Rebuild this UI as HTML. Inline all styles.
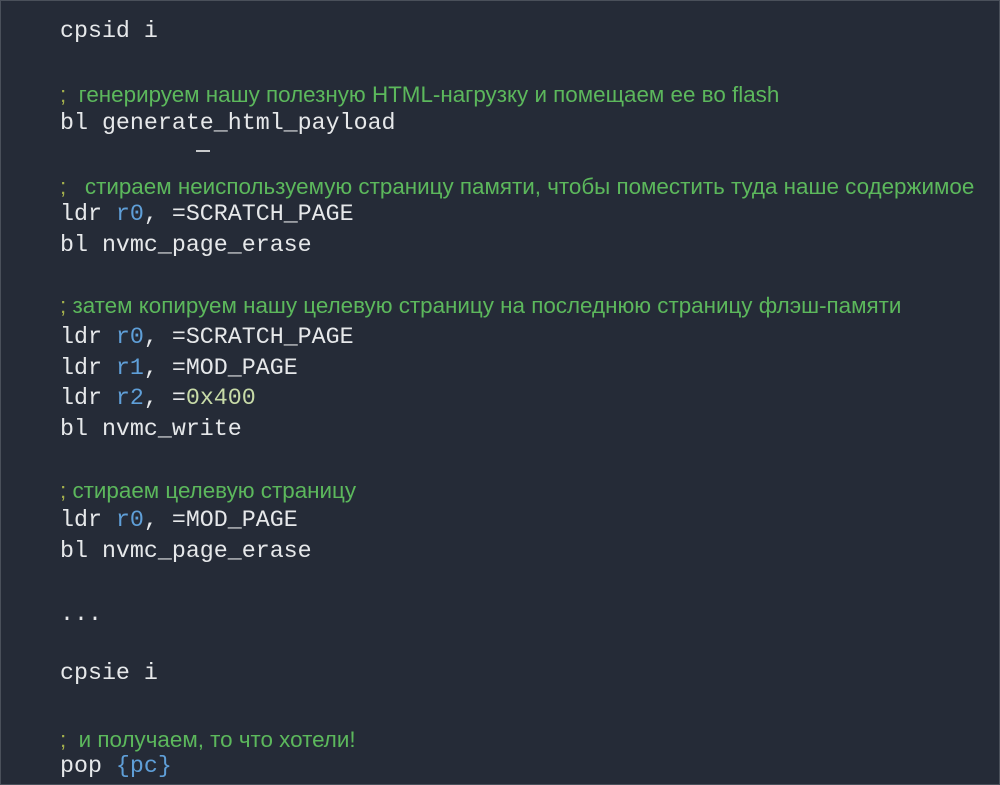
<!DOCTYPE html>
<html><head><meta charset="utf-8"><style>
html,body{margin:0;padding:0}
body{width:1000px;height:785px;background:#252b37;position:relative;overflow:hidden;box-shadow:inset 0 0 0 1px #4a505a}
.l{position:absolute;left:60px;height:30px;line-height:30px;white-space:pre;color:#e6e8ea;font-family:"Liberation Mono",monospace;font-size:23.3px}
.c{font-family:"Liberation Sans",sans-serif;font-size:22.4px;color:#5cb85c}
.s{color:#a4b04c}
.r{color:#5f9fd8}
.n{color:#c8dba8}
</style></head><body>
<div class="l" style="top:16px">cpsid i</div>
<div class="l c" style="top:80px"><span class="s">;</span>  генерируем нашу полезную HTML-нагрузку и помещаем ее во flash</div>
<div class="l" style="top:108px">bl generate_html_payload</div>
<div style="position:absolute;left:196px;top:150px;width:14px;height:2px;background:#c8cacc"></div>
<div class="l c" style="top:172px"><span class="s">;</span>   стираем неиспользуемую страницу памяти, чтобы поместить туда наше содержимое</div>
<div class="l" style="top:199px">ldr <span class="r">r0</span>, =SCRATCH_PAGE</div>
<div class="l" style="top:230px">bl nvmc_page_erase</div>
<div class="l c" style="top:291px"><span class="s">;</span> затем копируем нашу целевую страницу на последнюю страницу флэш-памяти</div>
<div class="l" style="top:322px">ldr <span class="r">r0</span>, =SCRATCH_PAGE</div>
<div class="l" style="top:353px">ldr <span class="r">r1</span>, =MOD_PAGE</div>
<div class="l" style="top:383px">ldr <span class="r">r2</span>, =<span class="n">0x400</span></div>
<div class="l" style="top:414px">bl nvmc_write</div>
<div class="l c" style="top:476px"><span class="s">;</span> стираем целевую страницу</div>
<div class="l" style="top:505px">ldr <span class="r">r0</span>, =MOD_PAGE</div>
<div class="l" style="top:536px">bl nvmc_page_erase</div>
<div class="l" style="top:599px">...</div>
<div class="l" style="top:658px">cpsie i</div>
<div class="l c" style="top:725px"><span class="s">;</span>  и получаем, то что хотели!</div>
<div class="l" style="top:751px">pop <span class="r">{pc}</span></div>
</body></html>
